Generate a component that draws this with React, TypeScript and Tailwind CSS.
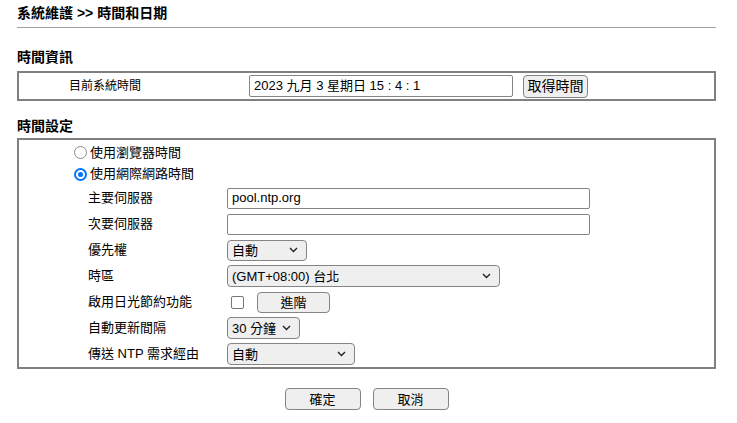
import type { ReactNode } from 'react';

const font = "font-['Liberation_Sans','Noto_Sans_CJK_TC',sans-serif]";

function Chevron() {
  return (
    <svg width="9" height="6" viewBox="0 0 9 6" className="shrink-0">
      <path d="M1 1 L4.5 4.5 L8 1" fill="none" stroke="#222" strokeWidth="1.4" />
    </svg>
  );
}

function Select({ value, width, height = 'h-[22px]' }: { value: string; width: string; height?: string }) {
  return (
    <button
      className={`${width} ${height} flex items-center justify-between pl-[4px] pr-[8px] rounded-[4px] border border-[#858585] bg-[#efefef] text-[13px] leading-none`}
    >
      <span>{value}</span>
      <Chevron />
    </button>
  );
}

function Row({ label, children }: { label: string; children: ReactNode }) {
  return (
    <div className="flex h-[26px] items-center">
      <div className="w-[208px] pl-[69px] text-[13px]">{label}</div>
      <div className="flex items-center">{children}</div>
    </div>
  );
}

function Radio({ checked, label }: { checked?: boolean; label: string }) {
  return (
    <div className="flex items-center gap-[3px] pl-[55px] text-[13px]">
      {checked ? (
        <span className="flex h-[13px] w-[13px] items-center justify-center rounded-full border-2 border-[#0075ff] bg-white">
          <span className="h-[5px] w-[5px] rounded-full bg-[#0075ff]" />
        </span>
      ) : (
        <span className="h-[13px] w-[13px] rounded-full border border-[#8a8a8a] bg-white" />
      )}
      <span>{label}</span>
    </div>
  );
}

export default function App() {
  return (
    <div className={`min-h-[423px] w-full bg-white text-black ${font}`}>
      <div className="ml-[17px] w-[699px]">
        <div className="h-[22px] pt-[5px] text-[14px] font-bold leading-[17px]">系統維護 &gt;&gt; 時間和日期</div>
        <div className="mt-[5px] h-px bg-[#a0a0a0]" />

        <div className="mt-[21px] h-[17px] text-[14px] font-bold leading-[17px]">時間資訊</div>
        <div className="mt-[5px] flex h-[30px] items-center border-2 border-[#808080]">
          <div className="w-[230px] pl-[50px] text-[12px]">目前系統時間</div>
          <div className="flex h-[22px] w-[264px] items-center rounded-[2px] border border-[#858585] bg-white pl-[4px] text-[13px]">
            2023 九月 3 星期日 15 : 4 : 1
          </div>
          <button className="ml-[10px] h-[23px] w-[65px] rounded-[4px] border border-[#858585] bg-[#efefef] text-[14px] leading-none">
            取得時間
          </button>
        </div>

        <div className="mt-[17px] h-[17px] text-[14px] font-bold leading-[17px]">時間設定</div>
        <div className="mt-[3px] border-2 border-[#808080] pt-[2px]">
          <div className="flex h-[21px] items-center">
            <Radio label="使用瀏覽器時間" />
          </div>
          <div className="flex h-[22px] items-center">
            <Radio checked label="使用網際網路時間" />
          </div>
          <Row label="主要伺服器">
            <div className="flex h-[21px] w-[363px] items-center rounded-[2px] border border-[#858585] bg-white pl-[4px] text-[13px]">
              pool.ntp.org
            </div>
          </Row>
          <Row label="次要伺服器">
            <div className="h-[21px] w-[363px] rounded-[2px] border border-[#858585] bg-white" />
          </Row>
          <Row label="優先權">
            <Select value="自動" width="w-[80px]" height="h-[21px]" />
          </Row>
          <Row label="時區">
            <Select value="(GMT+08:00) 台北" width="w-[273px]" />
          </Row>
          <Row label="啟用日光節約功能">
            <span className="ml-[4px] h-[13px] w-[13px] rounded-[2px] border border-[#767676] bg-white" />
            <button className="ml-[13px] h-[21px] w-[73px] rounded-[4px] border border-[#858585] bg-[#efefef] text-[13px] leading-none">
              進階
            </button>
          </Row>
          <Row label="自動更新間隔">
            <Select value="30 分鐘" width="w-[73px]" />
          </Row>
          <Row label="傳送 NTP 需求經由">
            <Select value="自動" width="w-[128px]" />
          </Row>
        </div>

        <div className="mt-[19px] flex justify-center gap-[12px]">
          <button className="h-[22px] w-[76px] rounded-[4px] border border-[#858585] bg-[#efefef] text-[13px] leading-none">
            確定
          </button>
          <button className="h-[22px] w-[76px] rounded-[4px] border border-[#858585] bg-[#efefef] text-[13px] leading-none">
            取消
          </button>
        </div>
      </div>
    </div>
  );
}
